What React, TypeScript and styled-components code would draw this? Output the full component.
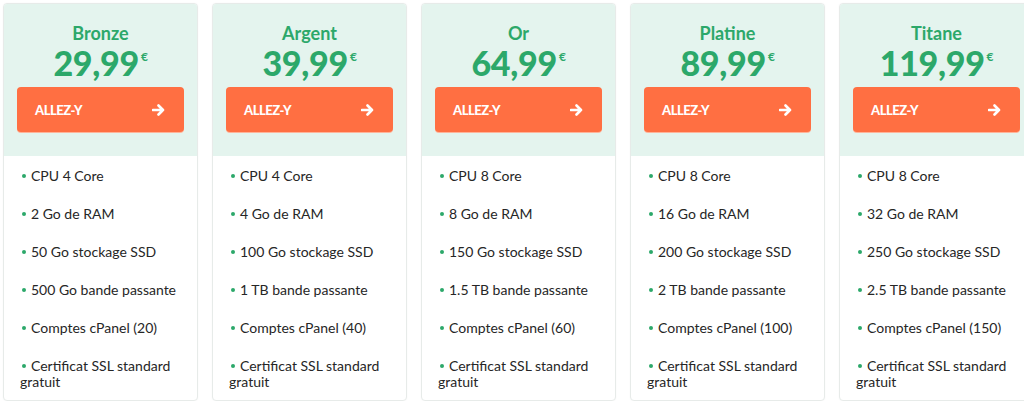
import React from "react";
import styled, { createGlobalStyle } from "styled-components";

const GlobalStyle = createGlobalStyle`
  html, body {
    margin: 0;
    padding: 0;
    background: #ffffff;
    overflow: hidden;
  }
  body {
    font-family: Lato, "Open Sans", Arial, sans-serif;
  }
`;

const Row = styled.div`
  display: flex;
  flex-wrap: nowrap;
  gap: 14px;
  padding: 3px 0 0 3px;
  width: 1100px;
`;

const Card = styled.div`
  flex: 0 0 195px;
  box-sizing: border-box;
  border: 1px solid #e7ebe9;
  border-radius: 4px;
  background: #ffffff;
  overflow: hidden;
  box-shadow: 0 0 2px rgba(0, 0, 0, 0.04);
`;

const Header = styled.div`
  background: #e4f4ee;
  padding: 18px 13px 24px 13px;
  display: flex;
  flex-direction: column;
  align-items: center;
`;

const Title = styled.div`
  font-size: 18px;
  line-height: 22px;
  font-weight: 700;
  color: #2ca86a;
`;

const Price = styled.div`
  font-size: 34px;
  line-height: 37px;
  font-weight: 900;
  color: #2ca86a;
  letter-spacing: -0.3px;
  display: flex;
  align-items: flex-start;
`;

const Currency = styled.span`
  font-size: 12px;
  line-height: 12px;
  font-weight: 700;
  margin-left: 2px;
  margin-top: 7px;
`;

const Button = styled.button`
  margin-top: 6px;
  width: 100%;
  height: 45px;
  box-sizing: border-box;
  border: none;
  border-radius: 4px;
  background: #ff6f42;
  box-shadow: 0 1px 0 #ffb49a;
  color: #ffffff;
  display: flex;
  align-items: center;
  justify-content: space-between;
  padding: 0 19px 0 18px;
  font-family: Lato, Arial, sans-serif;
  font-size: 13px;
  font-weight: 900;
  letter-spacing: -0.5px;
  text-transform: uppercase;
  cursor: pointer;
`;

const List = styled.ul`
  list-style: none;
  margin: 0;
  padding: 0 14px 0 16px;
`;

const Item = styled.li`
  font-size: 14px;
  line-height: 16px;
  color: #262626;
  padding: 12px 0 10px 0;
`;

const Dot = styled.span`
  display: inline-block;
  width: 4px;
  height: 4px;
  border-radius: 50%;
  background: #2ca86a;
  margin: 0 5px 0 2px;
  vertical-align: middle;
  position: relative;
  top: -1px;
`;

const Arrow = () => (
  <svg width="13" height="12" viewBox="0 0 13 12" fill="none">
    <path
      d="M1 6H11M6.5 1.5L11 6L6.5 10.5"
      stroke="#ffffff"
      strokeWidth="2.6"
      strokeLinecap="round"
      strokeLinejoin="round"
    />
  </svg>
);

type Plan = {
  name: string;
  price: string;
  cpu: number;
  ram: number;
  ssd: number;
  bw: string;
  cpanel: number;
};

const plans: Plan[] = [
  { name: "Bronze", price: "29,99", cpu: 4, ram: 2, ssd: 50, bw: "500 Go", cpanel: 20 },
  { name: "Argent", price: "39,99", cpu: 4, ram: 4, ssd: 100, bw: "1 TB", cpanel: 40 },
  { name: "Or", price: "64,99", cpu: 8, ram: 8, ssd: 150, bw: "1.5 TB", cpanel: 60 },
  { name: "Platine", price: "89,99", cpu: 8, ram: 16, ssd: 200, bw: "2 TB", cpanel: 100 },
  { name: "Titane", price: "119,99", cpu: 8, ram: 32, ssd: 250, bw: "2.5 TB", cpanel: 150 },
];

export default function App() {
  return (
    <>
      <GlobalStyle />
      <Row>
        {plans.map((p) => {
          const features = [
            `CPU ${p.cpu} Core`,
            `${p.ram} Go de RAM`,
            `${p.ssd} Go stockage SSD`,
            `${p.bw} bande passante`,
            `Comptes cPanel (${p.cpanel})`,
            "Certificat SSL standard gratuit",
          ];
          return (
            <Card key={p.name}>
              <Header>
                <Title>{p.name}</Title>
                <Price>
                  {p.price}
                  <Currency>€</Currency>
                </Price>
                <Button>
                  <span>Allez-y</span>
                  <Arrow />
                </Button>
              </Header>
              <List>
                {features.map((f) => (
                  <Item key={f}>
                    <Dot />
                    {f}
                  </Item>
                ))}
              </List>
            </Card>
          );
        })}
      </Row>
    </>
  );
}
